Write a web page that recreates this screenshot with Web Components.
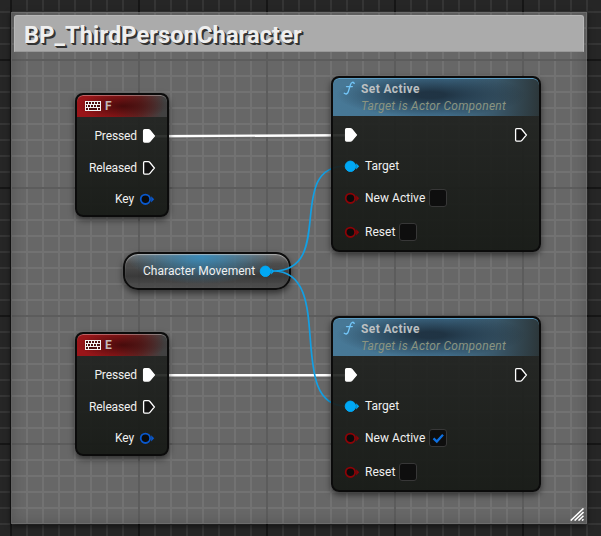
<!DOCTYPE html>
<html lang="en">
<head>
<meta charset="utf-8">
<title>Blueprint graph</title>
<style>html,body{margin:0;background:#262626;overflow:hidden}</style>
</head>
<body>
<bp-graph></bp-graph>
<script>
const define = (name, html, setup) => customElements.define(name, class extends HTMLElement {
  connectedCallback() {
    if (this.shadowRoot) return;
    const r = this.attachShadow({mode: 'open'});
    r.innerHTML = html;
    if (setup) setup(this, r);
  }
});

define('bp-pin', `<style>
:host{display:block;flex:none;width:14px;height:16px}
svg{display:block;width:14px;height:16px;overflow:visible}
</style><slot></slot>`, (el, r) => {
  const on = el.hasAttribute('on');
  const c = {exec: '#fff', object: '#00a8f5', key: '#0a58cc', bool: '#8b0307'}[el.getAttribute('kind')];
  const art = el.getAttribute('kind') === 'exec'
    ? `<path d="M2.6 1.7H6.2Q7.2 1.7 7.9 2.5L12.4 8L7.9 13.3Q7.2 14.1 6.2 14.1H2.6Q1.6 14.1 1.6 13.1V2.7Q1.6 1.7 2.6 1.7Z" fill="${on ? '#fff' : '#111'}" stroke="#fff" stroke-width="1.3"/>`
    : `<circle cx="6.4" cy="8.3" r="${on ? 5.2 : 4.7}" fill="${on ? c : '#0b0b0b'}" stroke="${c}" stroke-width="${on ? 1 : 1.8}"/><path d="M12.2 5.2L15.2 8.3L12.2 11.4Z" fill="${c}"/>`;
  r.innerHTML += `<svg viewBox="0 0 14 16">${art}</svg>`;
});

define('bp-check', `<style>
:host{display:block;box-sizing:border-box;width:18px;height:18px;border:1px solid #373737;border-radius:3px;background:#0e0e0e;flex:none}
svg{display:none;width:16px;height:16px}:host([checked]) svg{display:block}
</style><svg viewBox="0 0 16 16"><path d="M3.5 8.4L6.8 11.6L13 4.7" fill="none" stroke="#0d6fe0" stroke-width="2.3"/></svg>`);

define('bp-row', `<style>
:host{display:flex;align-items:center;gap:5px;height:18px;white-space:nowrap}
</style><slot></slot>`);

define('bp-event', `<style>
:host{display:block;box-sizing:border-box;width:94px;height:124px;border:2px solid #0b0b0b;border-radius:8px;
 background:linear-gradient(#202220e4,#161915f0);box-shadow:0 3px 6px #0008;overflow:hidden}
header{display:flex;align-items:center;gap:4px;height:22px;box-sizing:border-box;padding:0 0 1px 8px;border-radius:6px 6px 0 0;
 background:radial-gradient(ellipse 46px 13px at 46px 11px,#380808cc,#38080800),linear-gradient(100deg,#9c1519 0%,#8c1618 45%,#652322 68%,#414141 94%);
 box-shadow:inset 0 1px 0 #ffffff55;font-weight:700;color:#c3b9b9}
svg{width:16px;height:10px;display:block}
main{display:flex;flex-direction:column;align-items:flex-end;gap:14px;padding:10px 11px 0 0;letter-spacing:-.12px}
bp-row:last-child{margin-top:-1px;padding-right:3px}
</style><header><svg viewBox="0 0 16 10" shape-rendering="crispEdges"><rect width="16" height="10" fill="#f2f2f2"/><path d="M1 2H3M4 2H6M7 2H9M10 2H12M13 2H15M1 5H2M3 5H5M6 5H8M9 5H11M12 5H15M1 8H3M4 8H12M13 8H15" stroke="#4a0c0d" stroke-width="2"/></svg><slot></slot></header>
<main><bp-row><span>Pressed</span><bp-pin kind="exec" on></bp-pin></bp-row><bp-row><span>Released</span><bp-pin kind="exec"></bp-pin></bp-row><bp-row><span>Key</span><bp-pin kind="key"></bp-pin></bp-row></main>`);

define('bp-call', `<style>
:host{display:block;box-sizing:border-box;width:210px;height:176px;border:2px solid #0b0b0b;border-radius:8px;
 background:linear-gradient(#202220e4,#161915f0);box-shadow:0 3px 6px #0008;overflow:hidden}
header{position:relative;height:38px;box-sizing:border-box;padding:3px 0 0 28px;border-radius:6px 6px 0 0;
 background:radial-gradient(ellipse 95px 22px at 98px 17px,#182633d0 15%,#18263300),linear-gradient(94deg,#487997 0%,#42708e 55%,#3a596c 78%,#2c3639 100%);
 box-shadow:inset 0 1px 0 #5b9dc4}
b{display:block;line-height:17px;color:#bcc0c2;letter-spacing:.38px}
i{display:block;line-height:17px;color:#8a9480;white-space:nowrap;letter-spacing:.24px}
svg{position:absolute;left:9px;top:3px;width:14px;height:14px}
main{display:flex;flex-direction:column;padding:10px 11px 0 11px}
bp-row+bp-row{margin-top:14px}bp-row:nth-child(2){margin-top:13px}bp-row:last-child{margin-top:16px}
bp-row:first-child{justify-content:space-between}
bp-row span{margin-left:2px}
bp-check{margin-left:-1px}
</style><header><svg viewBox="0 0 14 14"><path d="M12.2 2.4C11.6.7 9.3.8 8.5 3.6L6.3 10.6C5.7 12.8 4 13.6 2.3 12.3M4.5 5.6H10.3" fill="none" stroke="#72c5f7" stroke-width="1.4" stroke-linecap="round"/></svg><b>Set Active</b><i>Target is Actor Component</i></header>
<main><bp-row><bp-pin kind="exec" on></bp-pin><bp-pin kind="exec"></bp-pin></bp-row>
<bp-row><bp-pin kind="object" on></bp-pin><span>Target</span></bp-row>
<bp-row><bp-pin kind="bool"></bp-pin><span>New Active</span><bp-check id="active"></bp-check></bp-row>
<bp-row><bp-pin kind="bool"></bp-pin><span>Reset</span><bp-check></bp-check></bp-row></main>`,
(el, r) => r.getElementById('active').toggleAttribute('checked', el.hasAttribute('active')));

define('bp-variable', `<style>
:host{display:flex;align-items:center;gap:4px;box-sizing:border-box;width:168px;height:38px;padding:0 0 0 18px;border:2px solid #0d0d0d;border-radius:15px;white-space:nowrap;
 background:radial-gradient(ellipse 74px 27px at 76px 3px,#3490c4dd,#3284b400),linear-gradient(#777b,#454545c0 28%,#303030d0 65%,#484848cc);
 box-shadow:0 3px 6px #0008,inset 0 1px 1px #ccca}
</style><slot></slot><bp-pin kind="object" on></bp-pin>`);

define('bp-comment', `<style>
:host{display:block;box-sizing:border-box;width:576px;height:512px;padding:3px;background:#ffffff4d;
 box-shadow:0 2px 6px #0009,inset 0 0 0 1px #77777766,inset 0 0 14px #0003}
header{box-sizing:border-box;height:37px;padding:0 9px;background:#ababab;border:1px solid #b8b8b8;border-bottom-color:#989898;border-radius:3px 3px 0 0;
 font:700 23.7px/38px Roboto,sans-serif;color:#efefef;text-shadow:1px 1px 0 #333,2px 2px 0 #333;letter-spacing:.05px}
svg{position:absolute;right:3px;bottom:3px;width:14px;height:13px}
</style><header><slot></slot></header><svg viewBox="0 0 14 13"><path d="M.7 12.6L13.5.4M4.6 12.6L13.5 4.1M8.5 12.6L13.5 7.8M12 12.6L13.5 11.2" stroke="#fff" stroke-width="1.5"/></svg>`);

define('bp-graph', `<style>
:host{display:block;position:relative;width:601px;height:536px;overflow:hidden;font:12px/18px Roboto,sans-serif;color:#f0f0f0;letter-spacing:.03px;
 background:
 linear-gradient(90deg,#161616 2px,transparent 0) 10px 0/128px 100%,
 linear-gradient(#161616 2px,transparent 0) 0 59px/100% 128px,
 linear-gradient(90deg,#353535 2px,transparent 0) 10px 0/16px 100%,
 linear-gradient(#353535 2px,transparent 0) 0 11px/100% 16px,#262626}
.at{position:absolute;left:var(--x);top:var(--y)}
svg{position:absolute;inset:0}
</style>
<bp-comment class="at" style="--x:11px;--y:12px">BP_ThirdPersonCharacter</bp-comment>
<bp-variable class="at" style="--x:123px;--y:252px"><span>Character Movement</span></bp-variable>
<svg width="601" height="536" fill="none"><path d="M154 136.2L346 135.2M154 375.3H346" stroke="#fff" stroke-width="2.4"/><path d="M273 271C337 271 284 166 346 166M273 271C337 271 284 406 346 406" stroke="#129fe3" stroke-width="1.7"/></svg>
<bp-event class="at" style="--x:75px;--y:93px">F</bp-event>
<bp-event class="at" style="--x:75px;--y:332px">E</bp-event>
<bp-call class="at" style="--x:331px;--y:76px"></bp-call>
<bp-call class="at" style="--x:331px;--y:316px" active></bp-call>`);
</script>
</body>
</html>
